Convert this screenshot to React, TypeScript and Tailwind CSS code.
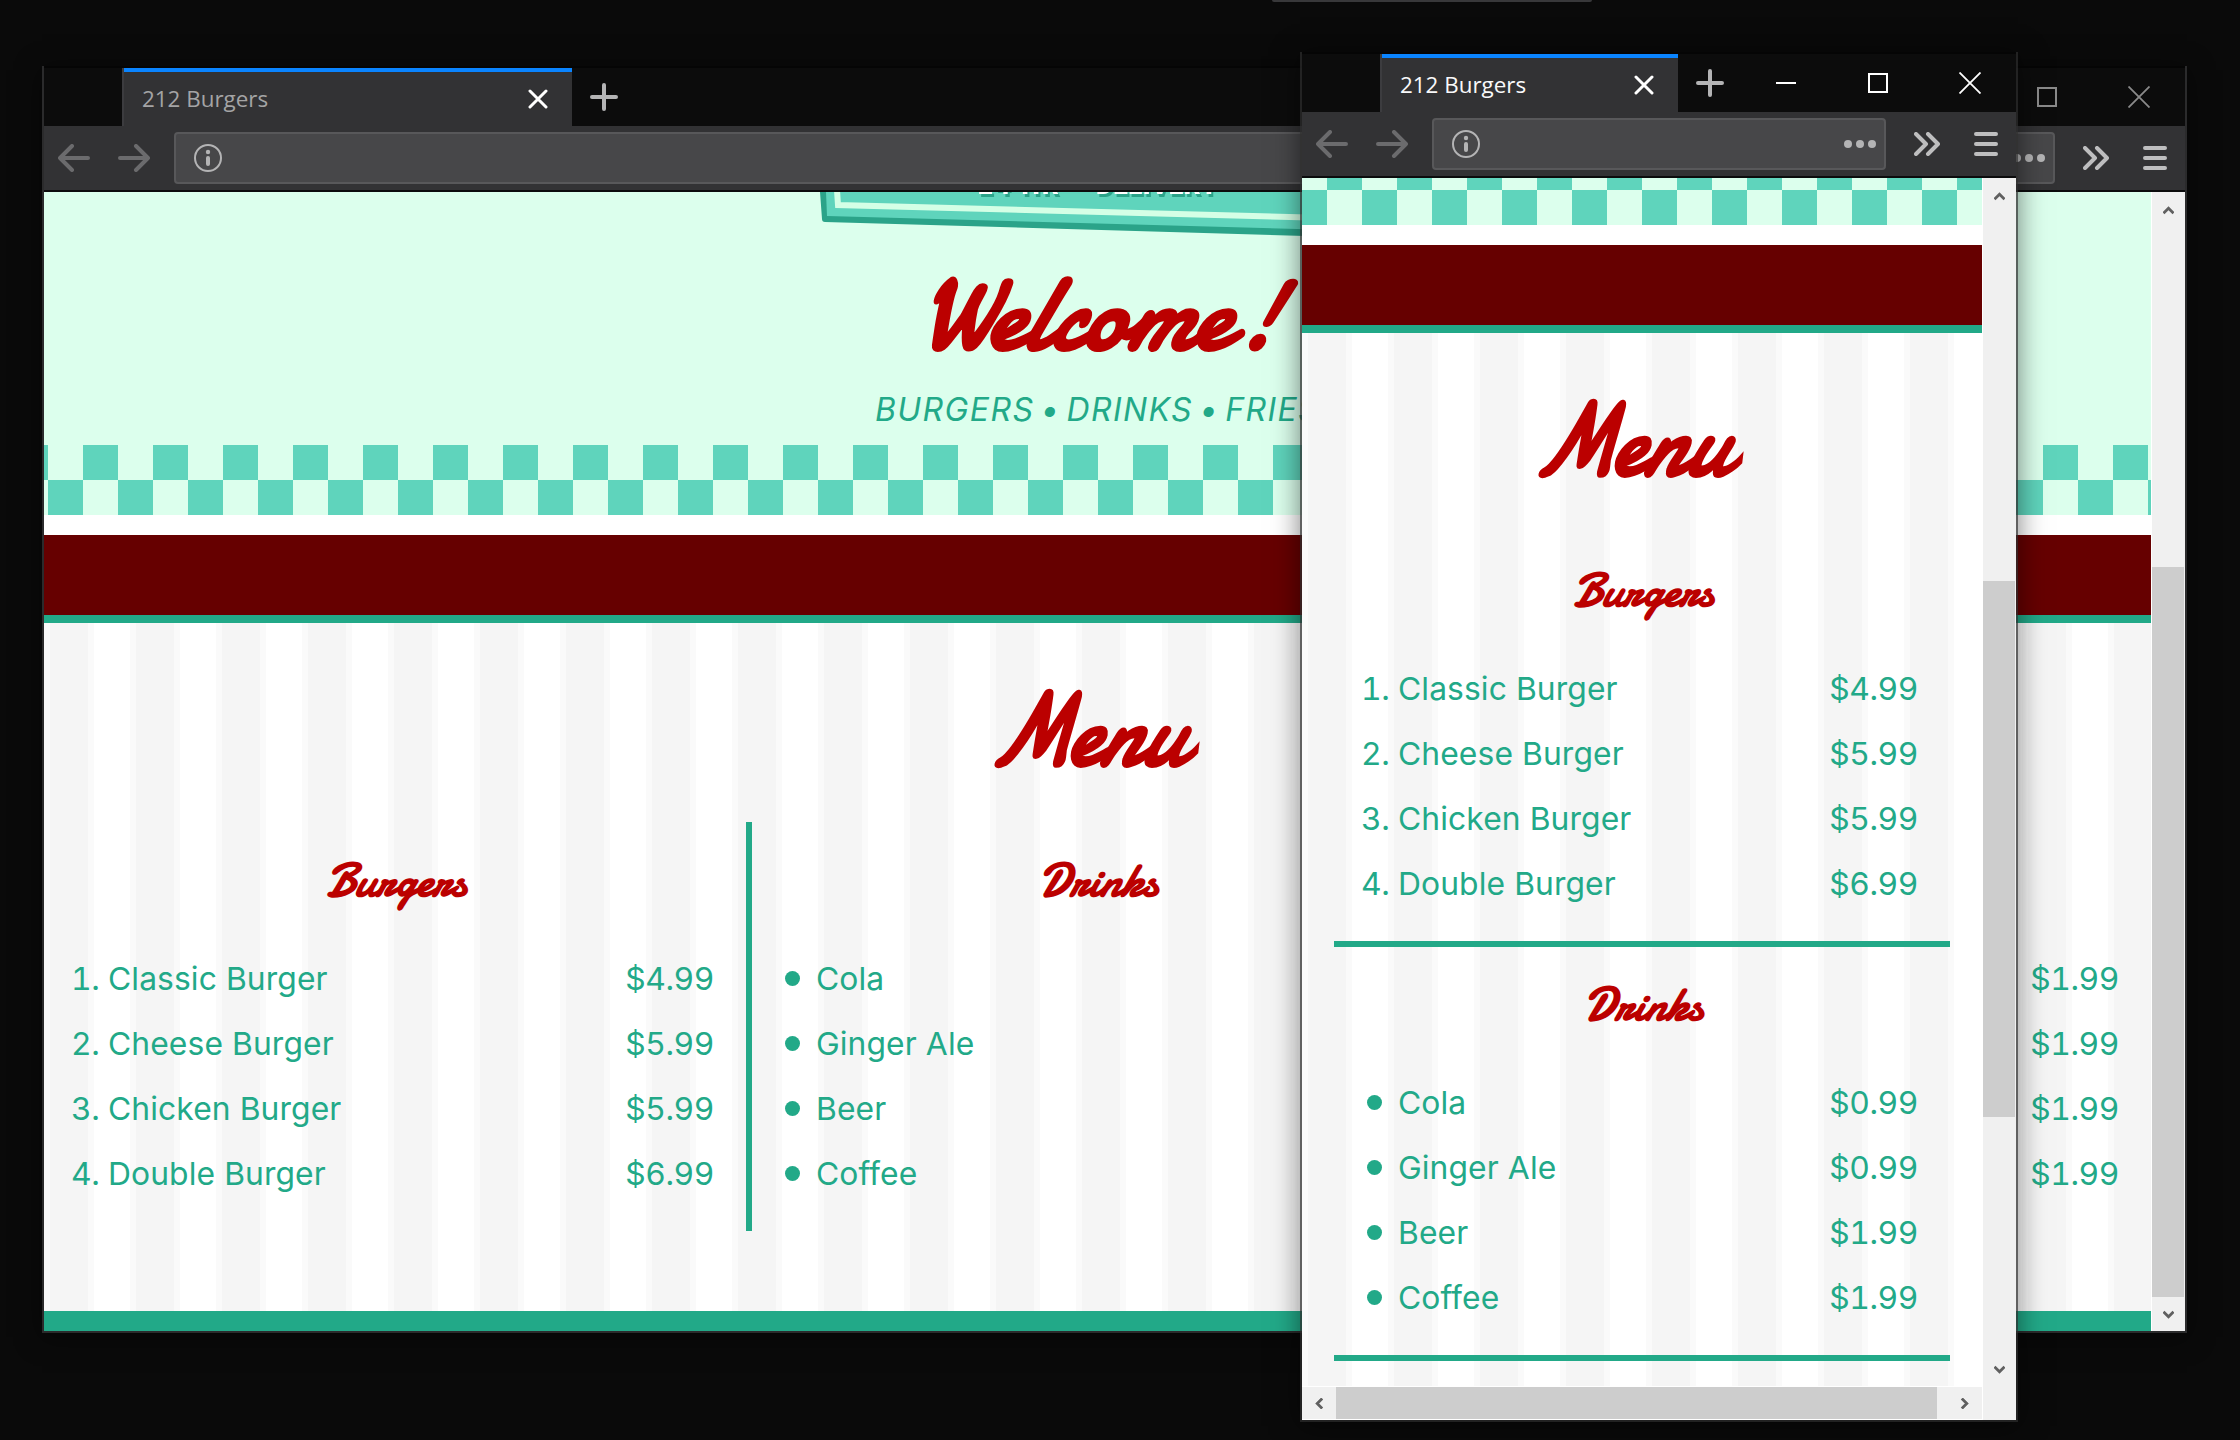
import React from 'react';

type Item = { name: string; price: string };

const burgers: Item[] = [
  { name: 'Classic Burger', price: '$4.99' },
  { name: 'Cheese Burger', price: '$5.99' },
  { name: 'Chicken Burger', price: '$5.99' },
  { name: 'Double Burger', price: '$6.99' },
];
const drinks: Item[] = [
  { name: 'Cola', price: '$0.99' },
  { name: 'Ginger Ale', price: '$0.99' },
  { name: 'Beer', price: '$1.99' },
  { name: 'Coffee', price: '$1.99' },
];
const fries: Item[] = [
  { name: 'Small Fries', price: '$1.99' },
  { name: 'Curly Fries', price: '$1.99' },
  { name: 'Wedges', price: '$1.99' },
  { name: 'Cheese Fries', price: '$1.99' },
];

/* ---------- icons ---------- */

function TabClose() {
  return (
    <svg viewBox="0 0 20 20" className="h-5 w-5 stroke-white" fill="none" strokeWidth="3" strokeLinecap="round">
      <path d="M2 2 18 18M18 2 2 18" />
    </svg>
  );
}
function Plus() {
  return (
    <svg viewBox="0 0 28 28" className="h-7 w-7 stroke-[#b4b4b5]" fill="none" strokeWidth="4" strokeLinecap="round">
      <path d="M14 2V26M2 14H26" />
    </svg>
  );
}
function Arrow({ flip = false }: { flip?: boolean }) {
  return (
    <svg
      viewBox="0 0 32 28"
      className={flip ? 'h-7 w-8 -scale-x-100 stroke-[#6b6b6d]' : 'h-7 w-8 stroke-[#6b6b6d]'}
      fill="none"
      strokeWidth="4"
      strokeLinecap="round"
      strokeLinejoin="round"
    >
      <path d="M14 2 2 14 14 26M2 14H30" />
    </svg>
  );
}
function Info() {
  return (
    <svg viewBox="0 0 28 28" className="h-7 w-7" fill="none">
      <circle cx="14" cy="14" r="13" stroke="#b4b4b5" strokeWidth="2" />
      <circle cx="14" cy="8" r="2.2" fill="#b4b4b5" />
      <path d="M14 14V20" stroke="#b4b4b5" strokeWidth="4" strokeLinecap="round" />
    </svg>
  );
}
function Dots() {
  return (
    <svg viewBox="0 0 32 8" className="h-2 w-8" fill="#b4b4b5">
      <circle cx="4" cy="4" r="4" />
      <circle cx="16" cy="4" r="4" />
      <circle cx="28" cy="4" r="4" />
    </svg>
  );
}
function Chevrons() {
  return (
    <svg viewBox="0 0 26 24" className="h-6 w-[26px] stroke-[#bebebf]" fill="none" strokeWidth="4" strokeLinecap="round" strokeLinejoin="round">
      <path d="M2 2 12 12 2 22M14 2 24 12 14 22" />
    </svg>
  );
}
function Burger() {
  return (
    <svg viewBox="0 0 24 24" className="h-6 w-6 stroke-[#bebebf]" fill="none" strokeWidth="4" strokeLinecap="round">
      <path d="M2 2H22M2 12H22M2 22H22" />
    </svg>
  );
}
function ScrollArrow({ className }: { className: string }) {
  return (
    <svg viewBox="0 0 11 9" className={'h-[9px] w-[11px] stroke-[#606060] ' + className} fill="none" strokeWidth="2.8">
      <path d="M0.5 7.2 5.5 2.2 10.5 7.2" />
    </svg>
  );
}

/* ---------- browser chrome ---------- */

function Chrome({ active }: { active: boolean }) {
  return (
    <>
      <div className="flex h-15 shrink-0 border-t-2 border-[#050505] bg-[#0c0c0c]">
        <div className="w-20 shrink-0 border-r-2 border-[#3c3c3f]" />
        <div
          className={
            active
              ? 'flex w-[296px] shrink-0 items-center justify-between border-t-4 border-[#0a84ff] bg-[#323234] pr-6 pl-[18px] text-[#f9f9fa]'
              : 'flex w-[448px] shrink-0 items-center justify-between border-t-4 border-[#0a84ff] bg-[#323234] pr-6 pl-[18px] text-[#a4a4a5]'
          }
        >
          <span className="font-['Open_Sans',sans-serif] text-[22.4px] leading-none whitespace-nowrap">212 Burgers</span>
          <TabClose />
        </div>
        <div className="flex flex-1 items-center pl-[18px]">
          <Plus />
        </div>
        <div
          className={
            active
              ? 'flex items-center pr-[35px] stroke-white text-white'
              : 'flex items-center pr-[35px] stroke-[#8a8a8a] text-[#8a8a8a]'
          }
        >
          <div className="h-0.5 w-5 bg-current" />
          <div className="ml-[72px] h-5 w-5 border-2 border-current" />
          <svg viewBox="0 0 22 22" className="ml-[71px] h-[22px] w-[22px]" fill="none" strokeWidth="1.8">
            <path d="M0.5 0.5 21.5 21.5M21.5 0.5 0.5 21.5" />
          </svg>
        </div>
      </div>
      <div className="flex h-[66px] shrink-0 items-center border-b-2 border-[#0c0c0d] bg-[#323234] pr-[18px] pl-3.5">
        <Arrow />
        <div className="w-7" />
        <Arrow flip />
        <div className="ml-6 flex h-[52px] flex-1 items-center justify-between rounded border-2 border-[#58585a] bg-[#474749] pr-2 pl-[18px]">
          <Info />
          <Dots />
        </div>
        <div className="ml-7">
          <Chevrons />
        </div>
        <div className="ml-[34px]">
          <Burger />
        </div>
      </div>
    </>
  );
}

/* ---------- page ---------- */

const script = 'block font-[Yellowtail,Damion,cursive] font-bold leading-none whitespace-nowrap text-[#bb0000]';

function MenuTitle() {
  return (
    <div className="flex h-[199px] shrink-0 items-center justify-center pt-4 pr-3">
      <h1 className={script + ' scale-x-86 -skew-x-12 text-[106px]'}>Menu</h1>
    </div>
  );
}

function Section({ title, items, ordered = false }: { title: string; items: Item[]; ordered?: boolean }) {
  return (
    <>
      <div className="flex h-[125px] items-center justify-center pb-2 pl-1">
        <h2 className={script + ' scale-x-97 -skew-x-6 text-[48px]'}>{title}</h2>
      </div>
      <ul className="mb-6 pr-8 pl-7 font-[Inter,sans-serif] text-[31.8px] leading-[65px] text-[#22a988]">
        {items.map((item, i) => (
          <li key={item.name} className="flex h-[65px] items-center pb-0.5">
            <span className="flex w-9 shrink-0 items-center">
              {ordered ? (
                <span className="-ml-px tracking-[-0.5px] tabular-nums">{i + 1}.</span>
              ) : (
                <span className="mb-px ml-[5px] size-[15px] rounded-full bg-[#22a988]" />
              )}
            </span>
            <span className="flex-1 tracking-[0.1px]">{item.name}</span>
            <span className="tracking-[-0.4px] tabular-nums">{item.price}</span>
          </li>
        ))}
      </ul>
    </>
  );
}

function Band() {
  return (
    <>
      <div className="h-5 shrink-0 bg-white" />
      <div className="h-22 shrink-0 border-b-8 border-[#22a988] bg-[#660000]" />
    </>
  );
}

const stripes =
  'bg-[repeating-linear-gradient(90deg,#fafafa_0_6px,#f5f5f5_6px_44px,#fafafa_44px_50px,#ffffff_50px_86px)]';
const checks = 'bg-[conic-gradient(#5fd4bc_25%,#dcffed_0_50%,#5fd4bc_0_75%,#dcffed_0)] bg-size-[70px_70px]';

function Sign() {
  return (
    <svg viewBox="818 192 560 46" className="block h-[46px] w-[560px] shrink-0">
      <path d="M820 192 822 219Q822 222 825 222L1376 238V192Z" fill="#2ba389" />
      <path d="M826 192 827 216 1370 231V192Z" fill="#5fd4bc" />
      <path d="M837 190 838 205 1366 219V190" fill="none" stroke="#d4ffe6" strokeWidth="6" />
      <g
        className="drop-shadow-[2px_3px_0_#2ba389]"
        fontFamily="Roboto, sans-serif"
        fontWeight="900"
        fontSize="26"
        fill="#ffffff"
      >
        <text x="978" y="194" textLength="81">24 HR</text>
        <text x="1096" y="194" textLength="121">DELIVERY</text>
      </g>
    </svg>
  );
}

function WideWindow() {
  return (
    <div className="absolute top-[66px] left-[42px] flex h-[1267px] w-[2145px] flex-col border-x-2 border-b-2 border-[#2b2b2c] bg-[#0c0c0c] shadow-[0_4px_24px_rgba(0,0,0,0.5)]">
      <Chrome active={false} />
      <div className="flex min-h-0 flex-1">
        <div className="flex min-w-0 flex-1 flex-col">
          <div className="flex h-[253px] shrink-0 flex-col items-center bg-[#dcffed]">
            <Sign />
            <div className="flex h-[137px] items-center justify-center pt-3.5 pl-3">
              <h1 className={script + ' scale-x-95 -skew-x-8 text-[110px]'}>Welcome!</h1>
            </div>
            <p className="h-[70px] font-[Inter,sans-serif] text-[32px] leading-[69px] tracking-[1.4px] text-[#22a988] italic [word-spacing:-4px]">
              BURGERS • DRINKS • FRIES
            </p>
          </div>
          <div className={checks + ' h-[70px] shrink-0 bg-position-[4px_0px]'} />
          <Band />
          <div className={stripes + ' flex min-h-0 flex-1 flex-col'}>
            <MenuTitle />
            <div className="flex">
              <div className="w-[708px] border-r-6 border-[#22a988]">
                <Section title="Burgers" items={burgers} ordered />
              </div>
              <div className="w-[697px] border-r-6 border-[#22a988]">
                <Section title="Drinks" items={drinks} />
              </div>
              <div className="flex-1">
                <Section title="Fries" items={fries} />
              </div>
            </div>
          </div>
          <div className="h-5 shrink-0 bg-[#22a988]" />
        </div>
        <div className="flex w-[34px] shrink-0 flex-col items-center border-l border-white bg-[#f0f0f0]">
          <ScrollArrow className="mt-3.5" />
          <div className="mt-[352px] h-[730px] w-8 self-start bg-[#cdcdcd]" />
          <ScrollArrow className="mt-[13px] rotate-180" />
        </div>
      </div>
    </div>
  );
}

function NarrowWindow() {
  return (
    <div className="absolute top-[52px] left-[1300px] flex h-[1370px] w-[718px] flex-col border-x-2 border-b-2 border-[#2b2b2b]/75 bg-clip-padding shadow-[0_4px_26px_rgba(0,0,0,0.5)]">
      <Chrome active />
      <div className="flex min-h-0 flex-1">
        <div className="flex min-w-0 flex-1 flex-col">
          <div className={checks + ' h-[47px] shrink-0 bg-position-[-10px_-23px]'} />
          <Band />
          <div className={stripes + ' min-h-0 flex-1 overflow-hidden'}>
            <MenuTitle />
            <div className="mx-8 border-b-6 border-[#22a988]">
              <Section title="Burgers" items={burgers} ordered />
            </div>
            <div className="mx-8 -mt-px border-b-6 border-[#22a988]">
              <Section title="Drinks" items={drinks} />
            </div>
          </div>
          <div className="flex h-[34px] shrink-0 items-center border-y border-white bg-[#f0f0f0]">
            <ScrollArrow className="ml-3 -rotate-90" />
            <div className="ml-[11px] h-8 w-[601px] bg-[#cdcdcd]" />
            <ScrollArrow className="ml-[22px] rotate-90" />
          </div>
        </div>
        <div className="flex w-[34px] shrink-0 flex-col items-center border-l border-white bg-[#f0f0f0]">
          <ScrollArrow className="mt-3.5" />
          <div className="mt-[380px] h-[536px] w-8 self-start bg-[#cdcdcd]" />
          <ScrollArrow className="mt-[248px] rotate-180" />
        </div>
      </div>
    </div>
  );
}

export default function App() {
  return (
    <div className="relative h-[1440px] w-[2240px] overflow-hidden bg-[#0a0a0a]">
      <div className="ml-[1272px] h-0.5 w-80 rounded-b bg-[#38383a]" />
      <WideWindow />
      <NarrowWindow />
    </div>
  );
}
